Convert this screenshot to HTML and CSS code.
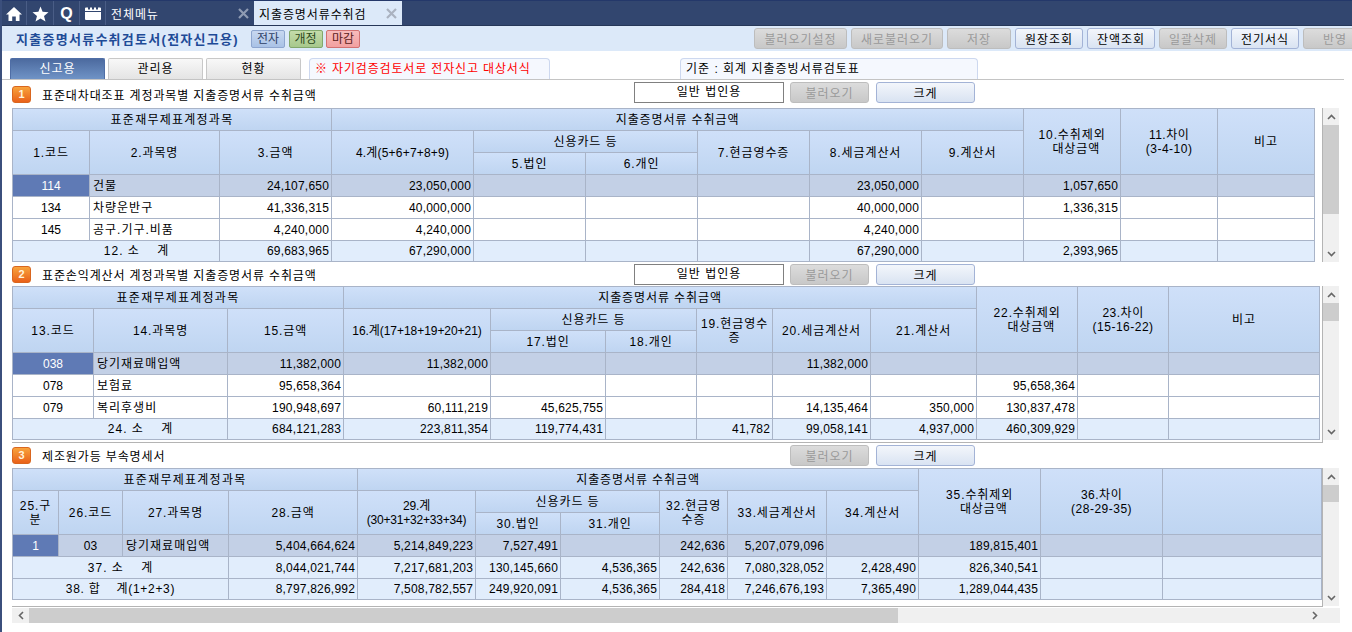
FILE: index.html
```html
<!DOCTYPE html>
<html lang="ko">
<head>
<meta charset="utf-8">
<title>지출증명서류수취검토서</title>
<link rel="stylesheet" href="styles.css">
</head>
<body>
<div class="app">
  <nav class="topbar">
    <a class="navicon ni1"><svg width="18" height="16" viewBox="0 0 18 16"><path d="M9 1 L17 8.5 H14.5 V15 H10.8 V10.5 H7.2 V15 H3.5 V8.5 H1 Z" fill="#fff"/></svg></a>
    <a class="navicon ni2"><svg width="17" height="16" viewBox="0 0 17 16"><path d="M8.5 0.5 L10.6 5.8 L16.5 6.2 L12 9.9 L13.5 15.5 L8.5 12.5 L3.5 15.5 L5 9.9 L0.5 6.2 L6.4 5.8 Z" fill="#fff"/></svg></a>
    <a class="navicon navq">Q</a>
    <a class="navicon"><svg width="16" height="13" viewBox="0 0 16 13"><path d="M0 1.5 A1 1 0 0 1 1 .5 H3 V2.5 H5 V.5 H7 V2.5 H9 V.5 H11 V2.5 H13 V.5 H15 A1 1 0 0 1 16 1.5 V4 H0 Z M0 5 H16 V12 A1 1 0 0 1 15 13 H1 A1 1 0 0 1 0 12 Z" fill="#fff"/></svg></a>
    <div class="tab-dark"><span>전체메뉴</span><svg class="x" width="11" height="11" viewBox="0 0 11 11"><path d="M1 1 L10 10 M10 1 L1 10" stroke="#8f9bb3" stroke-width="2.2"/></svg></div>
    <div class="tab-light"><span>지출증명서류수취검</span><svg class="x" width="11" height="11" viewBox="0 0 11 11"><path d="M1 1 L10 10 M10 1 L1 10" stroke="#aab2c0" stroke-width="2.2"/></svg></div>
  </nav>

  <header class="titlebar">
    <h1 class="title">지출증명서류수취검토서(전자신고용)</h1>
    <span class="badge b-blue">전자</span>
    <span class="badge b-green">개정</span>
    <span class="badge b-red">마감</span>
    <div class="actions">
      <button class="btn off w93">불러오기설정</button>
      <button class="btn off w92">새로불러오기</button>
      <button class="btn off w64">저장</button>
      <button class="btn w68">원장조회</button>
      <button class="btn w68">잔액조회</button>
      <button class="btn off w68">일괄삭제</button>
      <button class="btn w68">전기서식</button>
      <button class="btn off w64 last">반영</button>
    </div>
  </header>

  <div class="tabs">
    <span class="subtab active">신고용</span>
    <span class="subtab">관리용</span>
    <span class="subtab">현황</span>
    <span class="note red">※ 자기검증검토서로 전자신고 대상서식</span>
    <span class="note basis">기준 : 회계 지출증빙서류검토표</span>
  </div>

  <main class="content">
    <section class="head h1">
      <i class="num">1</i>
      <h2>표준대차대조표 계정과목별 지출증명서류 수취금액</h2>
      <span class="kind">일반 법인용</span>
      <button class="btn off loadbtn">불러오기</button>
      <button class="btn bigbtn">크게</button>
    </section>
    <div class="gridrow r1">
      <div class="frame">
        <table class="sheet t1">
          <colgroup><col><col><col><col><col><col><col><col><col><col><col><col></colgroup>
          <thead>
            <tr class="rh"><th colspan="3" class="sp">표준재무제표계정과목</th><th colspan="6">지출증명서류 수취금액</th><th rowspan="3">10.수취제외<br>&nbsp;&nbsp;대상금액</th><th rowspan="3"><span class="fx">11.차이<br>(3-4-10)</span></th><th rowspan="3">비고</th></tr>
            <tr class="rh"><th rowspan="2">1.코드</th><th rowspan="2">2.과목명</th><th rowspan="2">3.금액</th><th rowspan="2" class="fx">4.계(5+6+7+8+9)</th><th colspan="2">신용카드 등</th><th rowspan="2">7.현금영수증</th><th rowspan="2">8.세금계산서</th><th rowspan="2">9.계산서</th></tr>
            <tr class="rh"><th>5.법인</th><th>6.개인</th></tr>
          </thead>
          <tbody>
            <tr class="sel"><td class="c cur">114</td><td class="l">건물</td><td class="n">24,107,650</td><td class="n">23,050,000</td><td></td><td></td><td></td><td class="n">23,050,000</td><td></td><td class="n">1,057,650</td><td></td><td></td></tr>
            <tr><td class="c">134</td><td class="l">차량운반구</td><td class="n">41,336,315</td><td class="n">40,000,000</td><td></td><td></td><td></td><td class="n">40,000,000</td><td></td><td class="n">1,336,315</td><td></td><td></td></tr>
            <tr><td class="c">145</td><td class="l">공구.기구.비품</td><td class="n">4,240,000</td><td class="n">4,240,000</td><td></td><td></td><td></td><td class="n">4,240,000</td><td></td><td></td><td></td><td></td></tr>
            <tr class="tot last"><td colspan="2" class="c pre shift">12. 소    계</td><td class="n">69,683,965</td><td class="n">67,290,000</td><td></td><td></td><td></td><td class="n">67,290,000</td><td></td><td class="n">2,393,965</td><td></td><td></td></tr>
          </tbody>
        </table>
      </div>
      <div class="vbar"><svg class="up" width="9" height="6" viewBox="0 0 9 6"><path d="M1 5 L4.5 1.5 L8 5" fill="none" stroke="#666" stroke-width="1.6"/></svg><span class="thumb th1"></span><svg class="down" width="9" height="6" viewBox="0 0 9 6"><path d="M1 1 L4.5 4.5 L8 1" fill="none" stroke="#666" stroke-width="1.6"/></svg></div>
    </div>

    <section class="head h2">
      <i class="num">2</i>
      <h2>표준손익계산서 계정과목별 지출증명서류 수취금액</h2>
      <span class="kind">일반 법인용</span>
      <button class="btn off loadbtn">불러오기</button>
      <button class="btn bigbtn">크게</button>
    </section>
    <div class="gridrow r2">
      <div class="frame">
        <table class="sheet t2">
          <colgroup><col><col><col><col><col><col><col><col><col><col><col><col></colgroup>
          <thead>
            <tr class="rh"><th colspan="3" class="sp">표준재무제표계정과목</th><th colspan="6">지출증명서류 수취금액</th><th rowspan="3">22.수취제외<br>&nbsp;&nbsp;대상금액</th><th rowspan="3"><span class="fx">23.차이<br>(15-16-22)</span></th><th rowspan="3">비고</th></tr>
            <tr class="rh"><th rowspan="2">13.코드</th><th rowspan="2">14.과목명</th><th rowspan="2">15.금액</th><th rowspan="2" class="fz">16.계(17+18+19+20+21)</th><th colspan="2">신용카드 등</th><th rowspan="2">19.현금영수<br>증</th><th rowspan="2">20.세금계산서</th><th rowspan="2">21.계산서</th></tr>
            <tr class="rh"><th>17.법인</th><th>18.개인</th></tr>
          </thead>
          <tbody>
            <tr class="sel"><td class="c cur">038</td><td class="l">당기재료매입액</td><td class="n">11,382,000</td><td class="n">11,382,000</td><td></td><td></td><td></td><td class="n">11,382,000</td><td></td><td></td><td></td><td></td></tr>
            <tr><td class="c">078</td><td class="l">보험료</td><td class="n">95,658,364</td><td></td><td></td><td></td><td></td><td></td><td></td><td class="n">95,658,364</td><td></td><td></td></tr>
            <tr><td class="c">079</td><td class="l">복리후생비</td><td class="n">190,948,697</td><td class="n">60,111,219</td><td class="n">45,625,755</td><td></td><td></td><td class="n">14,135,464</td><td class="n">350,000</td><td class="n">130,837,478</td><td></td><td></td></tr>
            <tr class="tot last"><td colspan="2" class="c pre shift">24. 소    계</td><td class="n">684,121,283</td><td class="n">223,811,354</td><td class="n">119,774,431</td><td></td><td class="n">41,782</td><td class="n">99,058,141</td><td class="n">4,937,000</td><td class="n">460,309,929</td><td></td><td></td></tr>
          </tbody>
        </table>
      </div>
      <div class="vbar"><svg class="up" width="9" height="6" viewBox="0 0 9 6"><path d="M1 5 L4.5 1.5 L8 5" fill="none" stroke="#666" stroke-width="1.6"/></svg><span class="thumb th2"></span><svg class="down" width="9" height="6" viewBox="0 0 9 6"><path d="M1 1 L4.5 4.5 L8 1" fill="none" stroke="#666" stroke-width="1.6"/></svg></div>
    </div>

    <section class="head h3">
      <i class="num">3</i>
      <h2>제조원가등 부속명세서</h2>
      <button class="btn off loadbtn">불러오기</button>
      <button class="btn bigbtn">크게</button>
    </section>
    <div class="gridrow r3">
      <div class="frame">
        <table class="sheet t3">
          <colgroup><col><col><col><col><col><col><col><col><col><col><col><col><col></colgroup>
          <thead>
            <tr class="rh"><th colspan="4" class="sp">표준재무제표계정과목</th><th colspan="6">지출증명서류 수취금액</th><th rowspan="3">35.수취제외<br>&nbsp;&nbsp;대상금액</th><th rowspan="3"><span class="fx">36.차이<br>(28-29-35)</span></th><th rowspan="3"></th></tr>
            <tr class="rh"><th rowspan="2">25.구<br>분</th><th rowspan="2">26.코드</th><th rowspan="2">27.과목명</th><th rowspan="2">28.금액</th><th rowspan="2" class="fy">29.계<br>(30+31+32+33+34)</th><th colspan="2">신용카드 등</th><th rowspan="2">32.현금영<br>수증</th><th rowspan="2">33.세금계산서</th><th rowspan="2">34.계산서</th></tr>
            <tr class="rh"><th>30.법인</th><th>31.개인</th></tr>
          </thead>
          <tbody>
            <tr class="sel"><td class="c cur">1</td><td class="c">03</td><td class="l">당기재료매입액</td><td class="n">5,404,664,624</td><td class="n">5,214,849,223</td><td class="n">7,527,491</td><td></td><td class="n">242,636</td><td class="n">5,207,079,096</td><td></td><td class="n">189,815,401</td><td></td><td></td></tr>
            <tr class="tot"><td colspan="3" class="c pre">37. 소    계</td><td class="n">8,044,021,744</td><td class="n">7,217,681,203</td><td class="n">130,145,660</td><td class="n">4,536,365</td><td class="n">242,636</td><td class="n">7,080,328,052</td><td class="n">2,428,490</td><td class="n">826,340,541</td><td></td><td></td></tr>
            <tr class="tot last"><td colspan="3" class="c pre tight">38. 합    계(1+2+3)</td><td class="n">8,797,826,992</td><td class="n">7,508,782,557</td><td class="n">249,920,091</td><td class="n">4,536,365</td><td class="n">284,418</td><td class="n">7,246,676,193</td><td class="n">7,365,490</td><td class="n">1,289,044,435</td><td></td><td></td></tr>
          </tbody>
        </table>
      </div>
      <div class="vbar"><svg class="up" width="9" height="6" viewBox="0 0 9 6"><path d="M1 5 L4.5 1.5 L8 5" fill="none" stroke="#666" stroke-width="1.6"/></svg><span class="thumb th3"></span><svg class="down" width="9" height="6" viewBox="0 0 9 6"><path d="M1 1 L4.5 4.5 L8 1" fill="none" stroke="#666" stroke-width="1.6"/></svg></div>
    </div>
    <div class="hbar"><svg class="left" width="6" height="9" viewBox="0 0 6 9"><path d="M5 1 L1.5 4.5 L5 8" fill="none" stroke="#666" stroke-width="1.6"/></svg><span class="hthumb"></span><svg class="right" width="6" height="9" viewBox="0 0 6 9"><path d="M1 1 L4.5 4.5 L1 8" fill="none" stroke="#666" stroke-width="1.6"/></svg></div>
  </main>
</div>
</body>
</html>
```
FILE: styles.css
```css
* { box-sizing: border-box; }
html, body { margin: 0; padding: 0; height: 100%; overflow: hidden; background: #fff; }
body {
  font-family: "Liberation Sans", "Noto Sans CJK KR", sans-serif;
  font-size: 12px;
  color: #000;
}
.app { width: 1352px; height: 632px; border-left: 2px solid #3b4f7c; overflow: hidden; }

/* top navigation */
.topbar {
  height: 26px;
  background: #32466f;
  border-top: 1px solid #24386a;
  border-bottom: 1px solid #263758;
  display: flex;
  align-items: stretch;
  color: #fff;
}
.navicon {
  width: 26px;
  display: flex;
  align-items: center;
  justify-content: center;
  border-right: 1px solid #4a5d86;
  padding-top: 1px;
}
.ni1 { width: 25px; }
.ni2 { width: 27px; }
.navq { font: 700 16px "Liberation Sans", sans-serif; }
.tab-dark, .tab-light {
  display: flex;
  align-items: center;
  justify-content: space-between;
  font-size: 12px;
  letter-spacing: .9px;
}
.tab-dark { width: 148px; padding: 1px 5px 0 5px; color: #fff; }
.tab-light { width: 148px; padding: 1px 5px 0 5px; background: #dce9f9; color: #000; }

/* title bar */
.titlebar {
  height: 25px;
  background: #dce9f9;
  display: flex;
  align-items: center;
  padding-left: 14px;
}
.title {
  margin: 0 13px 0 0;
  width: 222px;
  font-size: 13px;
  font-weight: 700;
  letter-spacing: 1.27px;
  color: #1f4b97;
  white-space: nowrap;
}
.badge {
  width: 34px;
  height: 18px;
  line-height: 16px;
  margin-right: 3.5px;
  text-align: center;
  font-size: 12px;
  border-radius: 2px;
  border: 1px solid;
}
.b-blue { background: linear-gradient(#c8d8f0, #a9c2e6); border-color: #8ea6cf; color: #2d3f66; }
.b-green { background: linear-gradient(#c4dcaa, #a7c88c); border-color: #82a86c; color: #2e4a20; }
.b-red { background: linear-gradient(#f8bcbc, #f2a0a0); border-color: #d27272; color: #5a2020; }
.actions { margin-left: auto; display: flex; gap: 4px; flex: none; margin-right: -15px; }
.btn {
  height: 21px;
  padding: 0;
  font-family: inherit;
  font-size: 12px;
  letter-spacing: 1px;
  color: #000;
  background: linear-gradient(#f3f6fb, #d9e3f2);
  border: 1px solid #a3b3d6;
  border-radius: 3px;
}
.btn.off {
  background: linear-gradient(#dcdcdc, #c8c8c8);
  border-color: #bdbdbd;
  color: #9a9a9a;
}
.w93 { width: 93px; } .w92 { width: 92px; } .w64 { width: 64px; } .w68 { width: 68px; }

/* sub tabs */
.tabs {
  height: 29px;
  padding: 7px 0 0 8px;
  display: flex;
  align-items: flex-end;
  margin-right: 8px;
  border-bottom: 1px solid #c4c4c4;
}
.subtab {
  width: 95px;
  height: 21px;
  margin-right: 3px;
  line-height: 20px;
  text-align: center;
  letter-spacing: 1px;
  border: 1px solid #c8c8c8;
  border-bottom: 0;
  border-radius: 2px 2px 0 0;
  background: linear-gradient(#f8f8f8, #e4e4e4);
}
.subtab.active {
  color: #fff;
  border-color: #4f6ea6;
  background: linear-gradient(#4c6a9f, #6f93c6);
}
.note {
  height: 21px;
  line-height: 20px;
  padding-left: 5px;
  letter-spacing: 1px;
  background: #f5f8fe;
  border: 1px solid #cdd8ef;
  border-bottom: 0;
  border-radius: 4px 4px 0 0;
  white-space: nowrap;
}
.note.red { width: 241px; margin-left: 5px; color: #f00; letter-spacing: .85px; }
.note.basis { width: 298px; margin-left: 130px; }

/* sections */
.content { padding-left: 10px; }
.head {
  width: 963px;
  display: flex;
  align-items: center;
}
.head.h1 { height: 28px; }
.head.h2 { height: 24px; }
.head.h3 { height: 25px; }
.h1 .kind, .h1 .btn { margin-bottom: 3px; }
.head h2 {
  margin: 0;
  flex: 1;
  font-size: 12px;
  font-weight: 400;
  letter-spacing: .87px;
  white-space: nowrap;
}
.num {
  width: 19px;
  height: 17px;
  margin-right: 11px;
  border-radius: 3px;
  text-align: center;
  font: 700 11px/15px "Liberation Sans", sans-serif;
  color: #fff3dc;
  background: linear-gradient(#f8a33c, #e9611a);
  border: 1px solid #d9661f;
}
.kind {
  width: 150px;
  height: 21px;
  line-height: 19px;
  text-align: center;
  letter-spacing: 1px;
  border: 1px solid #808080;
  background: #fff;
}
.loadbtn { width: 79px; margin: 0 7px 0 6px; }
.bigbtn { width: 99px; }

.gridrow { display: flex; width: 1328px; }
.r1 { height: 154px; }
.r2 { height: 157px; }
.r3 { height: 139px; }
.frame {
  width: 1311px;
  flex: none;
  overflow: hidden;
  border-right: 1px solid #b4b4b4;
  border-bottom: 1px solid #b4b4b4;
}
.r1 .frame { border-bottom: 0; }

/* sheets */
.sheet {
  table-layout: fixed;
  border-collapse: separate;
  border-spacing: 0;
  border-top: 1px solid #a9b4c8;
  border-left: 1px solid #a9b4c8;
}
.sheet th, .sheet td {
  padding: 0;
  border-right: 1px solid #a9b4c8;
  border-bottom: 1px solid #a9b4c8;
  line-height: 14px;
  font-weight: 400;
  white-space: nowrap;
  overflow: hidden;
}
.sheet th {
  text-align: center;
  letter-spacing: .9px;
  background: linear-gradient(#cfe0f9, #bfd5f1);
}
.sheet th.sp { letter-spacing: 1.25px; }
.sheet th.fx { letter-spacing: .2px; }
.sheet th.fy { letter-spacing: -.2px; }
.sheet th.fz { letter-spacing: -.05px; }
.sheet th .fx { letter-spacing: .5px; }
.sheet tr { height: 22px; }
.sheet tr.last { height: 21px; }
.sheet td.n { text-align: right; padding-right: 2px; letter-spacing: .2px; }
.sheet td.c { text-align: center; }
.sheet td.l { text-align: left; padding-left: 3px; letter-spacing: 1px; }
.sheet td.pre { white-space: pre; letter-spacing: 1px; }
.sheet td.shift { padding-left: 41px; }
.sheet td.tight { letter-spacing: .7px; }
.sheet td.cur { background: #5f7ab5; color: #fff; }
.sel td { background: #c3d0e6; }
.tot td { background: #e1edfc; }

.t1 { width: 1303px; }
.t1 col:nth-child(1) { width: 77px; }
.t1 col:nth-child(2) { width: 130px; }
.t1 col:nth-child(3) { width: 112px; }
.t1 col:nth-child(4) { width: 142px; }
.t1 col:nth-child(5), .t1 col:nth-child(6), .t1 col:nth-child(7), .t1 col:nth-child(8) { width: 112px; }
.t1 col:nth-child(9) { width: 102px; }
.t1 col:nth-child(10), .t1 col:nth-child(11), .t1 col:nth-child(12) { width: 97px; }

.t2 { width: 1308px; }
.t2 col:nth-child(1) { width: 81px; }
.t2 col:nth-child(2) { width: 134px; }
.t2 col:nth-child(3) { width: 116px; }
.t2 col:nth-child(4) { width: 147px; }
.t2 col:nth-child(5) { width: 115px; }
.t2 col:nth-child(6) { width: 91px; }
.t2 col:nth-child(7) { width: 76px; }
.t2 col:nth-child(8) { width: 98px; }
.t2 col:nth-child(9) { width: 106px; }
.t2 col:nth-child(10) { width: 101px; }
.t2 col:nth-child(11) { width: 91px; }
.t2 col:nth-child(12) { width: 151px; }

.t3 { width: 1310px; }
.t3 col:nth-child(1) { width: 46px; }
.t3 col:nth-child(2) { width: 64px; }
.t3 col:nth-child(3) { width: 106px; }
.t3 col:nth-child(4) { width: 129px; }
.t3 col:nth-child(5) { width: 118px; }
.t3 col:nth-child(6) { width: 85px; }
.t3 col:nth-child(7) { width: 99px; }
.t3 col:nth-child(8) { width: 68px; }
.t3 col:nth-child(9) { width: 99px; }
.t3 col:nth-child(10) { width: 92px; }
.t3 col:nth-child(11), .t3 col:nth-child(12) { width: 122px; }
.t3 col:nth-child(13) { width: 159px; }

/* scrollbars */
.vbar {
  width: 16px;
  flex: none;
  background: #f0f0f0;
  display: flex;
  flex-direction: column;
  align-items: center;
}
.r1 .vbar, .r2 .vbar { height: 154px; }
.r3 .vbar { height: 138px; }
.vbar .up { margin-top: 6px; margin-bottom: 5px; flex: none; }
.vbar .down { margin-top: auto; margin-bottom: 5px; flex: none; }
.thumb { width: 16px; background: #cdcdcd; display: block; flex: none; }
.th1 { height: 89px; }
.th2 { height: 18px; }
.th3 { height: 17px; }
.hbar {
  width: 1328px;
  height: 15px;
  margin-top: 1px;
  background: #f0f0f0;
  display: flex;
  align-items: center;
}
.hbar .left { margin-left: 6px; margin-right: 5px; flex: none; }
.hthumb { width: 869px; height: 15px; background: #cdcdcd; display: block; flex: none; }
.hbar .right { margin-left: auto; margin-right: 22px; flex: none; }
```
